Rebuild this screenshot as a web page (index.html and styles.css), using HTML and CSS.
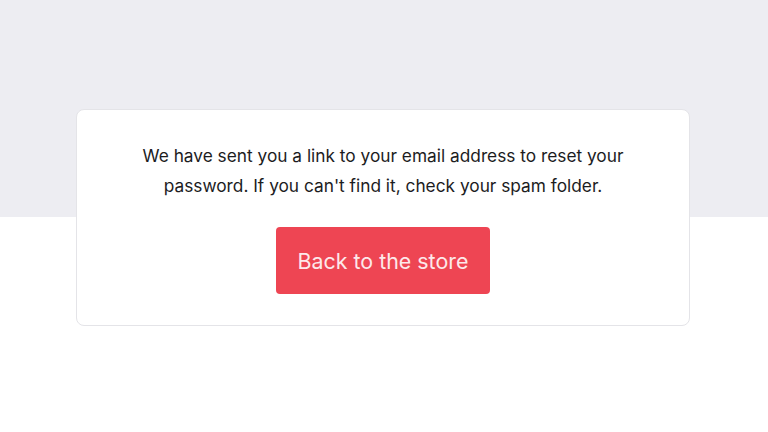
FILE: index.html
```html
<!DOCTYPE html>
<html>
<head>
<meta charset="utf-8">
<link rel="stylesheet" href="styles.css">
</head>
<body>
<div class="page">
  <div class="card">
    <p class="message">We have sent you a link to your email address to reset your<br>password. If you can't find it, check your spam folder.</p>
    <a class="btn" href="#">Back to the store</a>
  </div>
</div>
</body>
</html>
```

FILE: styles.css
```css
html, body {
  margin: 0;
  padding: 0;
  background: #ffffff;
}
.page {
  width: 768px;
  height: 432px;
  background: linear-gradient(#ededf2 0, #ededf2 217px, #ffffff 217px);
  padding-top: 109px;
  box-sizing: border-box;
  font-family: Inter, "Noto Sans", sans-serif;
}
.card {
  margin-left: 76px;
  width: 614px;
  height: 217px;
  box-sizing: border-box;
  background: #ffffff;
  border: 1px solid #e4e4e8;
  border-radius: 8px;
  padding-top: 31px;
  display: flex;
  flex-direction: column;
  align-items: center;
}
.message {
  margin: 0;
  font-size: 17.3px;
  line-height: 30px;
  color: #1c1c1e;
  text-align: center;
}
.btn {
  margin-top: 26px;
  width: 214px;
  height: 67px;
  display: flex;
  align-items: center;
  justify-content: center;
  background: #ee4553;
  border-radius: 4px;
  color: #fde8ea;
  font-size: 21.4px;
  text-decoration: none;
}
```
